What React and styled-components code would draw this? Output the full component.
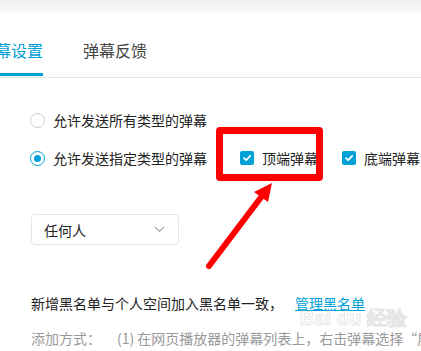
import React from "react";
import styled, { createGlobalStyle } from "styled-components";

const Global = createGlobalStyle`
  html, body { margin: 0; padding: 0; background: #fff; overflow: hidden; }
  body { width: 421px; height: 351px; font-family: "Noto Sans CJK SC", "Noto Sans", sans-serif; }
  * { box-sizing: border-box; }
`;

const Page = styled.div`
  position: relative;
  width: 421px;
  height: 351px;
  overflow: hidden;
  background: #fff;
`;

const TopBar = styled.div`
  height: 13px;
  background: linear-gradient(#efefef, #fafafa);
`;

const TabBar = styled.div`
  display: flex;
  gap: 40px;
  margin-left: -21px;
  padding-bottom: 1px;
  border-bottom: 1px solid #e3e3e3;
  width: 442px;
`;

const Tab = styled.div`
  height: 63px;
  padding-top: 27px;
  font-size: 16px;
  line-height: 20px;
  color: ${(p) => (p.$active ? "#00a1d6" : "#444")};
  border-bottom: 3px solid ${(p) => (p.$active ? "#00a1d6" : "transparent")};
  white-space: nowrap;
`;

const Content = styled.div`
  padding-left: 30px;
  display: flex;
  flex-direction: column;
`;

const RadioRow = styled.div`
  display: flex;
  align-items: center;
  height: 20px;
  margin-top: ${(p) => p.$mt}px;
  font-size: 14px;
  color: #222;
  white-space: nowrap;
`;

const Radio = styled.span`
  width: 15px;
  height: 15px;
  border-radius: 50%;
  border: 1px solid ${(p) => (p.$checked ? "#00a1d6" : "#cfcfcf")};
  display: inline-flex;
  align-items: center;
  justify-content: center;
  margin-right: 8px;
  flex: none;
  &::after {
    content: "";
    width: 7px;
    height: 7px;
    border-radius: 50%;
    background: ${(p) => (p.$checked ? "#00a1d6" : "transparent")};
  }
`;

const CheckGroup = styled.div`
  display: flex;
  align-items: center;
  margin-left: ${(p) => p.$ml}px;
`;

const Check = styled.span`
  width: 14px;
  height: 14px;
  border-radius: 2px;
  background: #00a1d6;
  display: inline-flex;
  align-items: center;
  justify-content: center;
  margin-right: 8px;
  flex: none;
`;

const Select = styled.div`
  margin-top: 46px;
  margin-left: 1px;
  width: 148px;
  height: 31px;
  border: 1px solid #e5e5e5;
  border-radius: 4px;
  display: flex;
  align-items: center;
  justify-content: space-between;
  padding: 0 13px 0 12px;
  font-size: 14px;
  color: #222;
`;

const Line = styled.div`
  height: 20px;
  line-height: 20px;
  margin-top: ${(p) => p.$mt}px;
  margin-left: 1px;
  font-size: 14px;
  color: ${(p) => (p.$muted ? "#999" : "#222")};
  white-space: nowrap;
`;

const Link = styled.a`
  color: #00a1d6;
  text-decoration: underline;
  margin-left: 12px;
`;

const Gap = styled.span`
  display: inline-block;
  width: ${(p) => p.$w}px;
`;

const Highlight = styled.div`
  position: absolute;
  left: 216px;
  top: 127px;
  width: 107px;
  height: 54px;
  border: 7px solid #ff0000;
  border-radius: 4px;
`;

const Overlay = styled.svg`
  position: absolute;
  left: 0;
  top: 0;
  pointer-events: none;
`;

const Watermark = styled.div`
  position: absolute;
  left: 300px;
  top: 305px;
  font-family: "Liberation Sans", sans-serif;
  font-size: 20px;
  font-weight: bold;
  color: transparent;
  -webkit-text-stroke: 1px rgba(200, 200, 200, 0.45);
  white-space: nowrap;
`;

const CheckIcon = () => (
  <svg width="10" height="10" viewBox="0 0 10 10">
    <path d="M2 5.2 L4.2 7.2 L8.2 2.8" fill="none" stroke="#fff" strokeWidth="1.8" strokeLinecap="round" strokeLinejoin="round" />
  </svg>
);

export default function App() {
  return (
    <Page>
      <Global />
      <TopBar />
      <TabBar>
        <Tab $active>弹幕设置</Tab>
        <Tab>弹幕反馈</Tab>
      </TabBar>
      <Content>
        <RadioRow $mt={32}>
          <Radio />
          允许发送所有类型的弹幕
        </RadioRow>
        <RadioRow $mt={18}>
          <Radio $checked />
          允许发送指定类型的弹幕
          <CheckGroup $ml={33}>
            <Check>
              <CheckIcon />
            </Check>
            顶端弹幕
          </CheckGroup>
          <CheckGroup $ml={24}>
            <Check>
              <CheckIcon />
            </Check>
            底端弹幕
          </CheckGroup>
        </RadioRow>
        <Select>
          <span>任何人</span>
          <svg width="11" height="7" viewBox="0 0 11 7">
            <path d="M1 1 L5.5 5.5 L10 1" fill="none" stroke="#aaa" strokeWidth="1.2" />
          </svg>
        </Select>
        <Line $mt={48}>
          新增黑名单与个人空间加入黑名单一致，
          <Link>管理黑名单</Link>
        </Line>
        <Line $mt={15} $muted>
          添加方式：<Gap $w={16} />(1) 在网页播放器的弹幕列表上，右击弹幕选择“屏蔽该用户”
        </Line>
      </Content>
      <Watermark>Bai du 经验</Watermark>
      <Highlight />
      <Overlay width="421" height="351" viewBox="0 0 421 351">
        <line x1="209" y1="266" x2="262" y2="196" stroke="#ff0000" strokeWidth="6" strokeLinecap="round" />
        <polygon points="272,183 268,202 254,192" fill="#ff0000" />
      </Overlay>
    </Page>
  );
}
